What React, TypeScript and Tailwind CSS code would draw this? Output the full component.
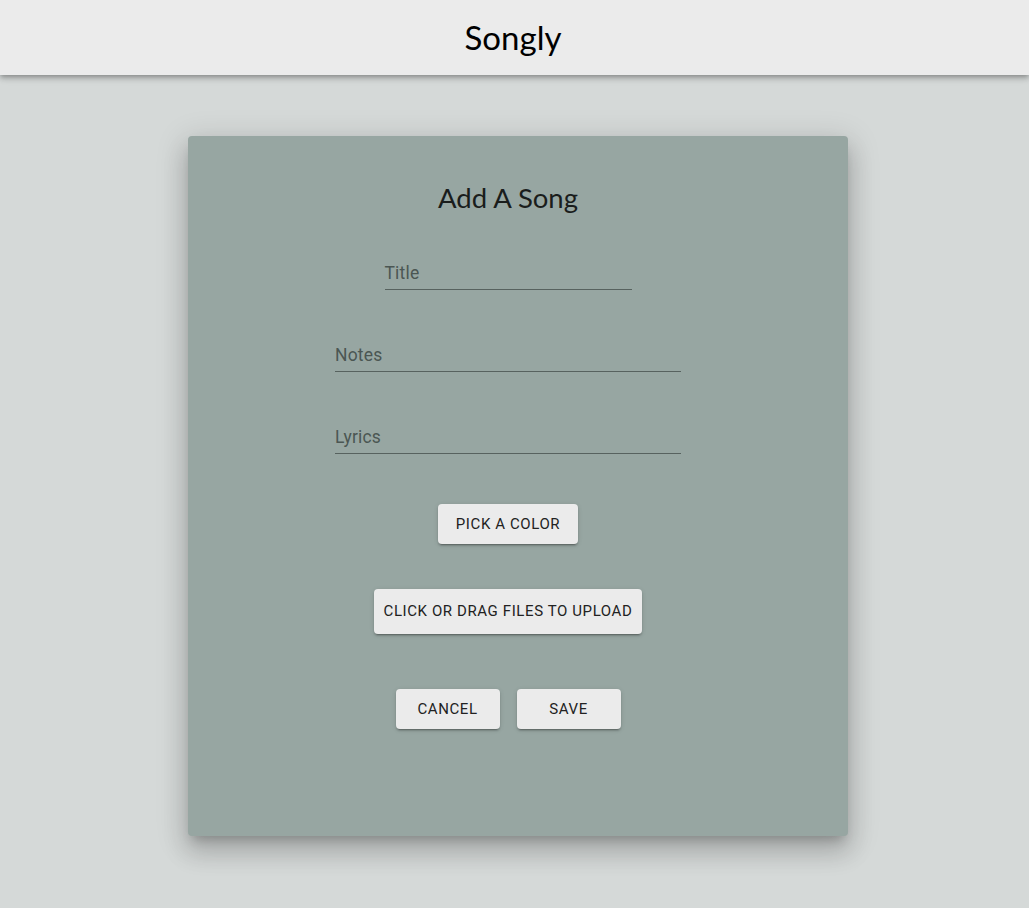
import React from "react";

const fields = [
  { label: "Title", width: "w-[247px]" },
  { label: "Notes", width: "w-[346px]" },
  { label: "Lyrics", width: "w-[346px]" },
];

function Field({ label, width }: { label: string; width: string }) {
  return (
    <div className={`${width} border-b border-[#57625f] pb-[6px] text-left`}>
      <div className="text-[17.5px] leading-[20px] text-[#4b5653] tracking-[0.01em]">{label}</div>
    </div>
  );
}

function Button({ children, className = "" }: { children: React.ReactNode; className?: string }) {
  return (
    <button
      className={`rounded-[4px] bg-[#ebebeb] text-[15px] font-normal uppercase tracking-[0.04em] text-[#222] shadow-[0_3px_1px_-2px_rgba(0,0,0,0.2),0_2px_2px_0_rgba(0,0,0,0.14),0_1px_5px_0_rgba(0,0,0,0.12)] ${className}`}
    >
      {children}
    </button>
  );
}

export default function App() {
  return (
    <div className="min-h-[908px] bg-[#d5d9d8] font-['Roboto',sans-serif]">
      {/* Header */}
      <header className="relative z-10 flex h-[75px] items-center justify-center bg-[#ebebeb] shadow-[0_2px_4px_-1px_rgba(0,0,0,0.2),0_4px_5px_0_rgba(0,0,0,0.14),0_1px_10px_0_rgba(0,0,0,0.12)]">
        <h1 className="pr-[3px] font-['Lato',sans-serif] text-[33px] leading-none text-black">Songly</h1>
      </header>

      <div className="flex justify-center pl-[7px] pt-[61px]">
        <div className="flex h-[700px] w-[660px] flex-col items-center rounded-[4px] bg-[#97a6a2] pr-[20px] pt-[45px] shadow-[0_8px_10px_-5px_rgba(0,0,0,0.2),0_16px_24px_2px_rgba(0,0,0,0.14),0_6px_30px_5px_rgba(0,0,0,0.12)]">
          <h2 className="font-['Lato',sans-serif] text-[27.5px] leading-[34px] text-[#1a1d1c]">Add A Song</h2>

          <div className="mt-[48px] flex flex-col items-center gap-[55px]">
            {fields.map((f) => (
              <Field key={f.label} label={f.label} width={f.width} />
            ))}
          </div>

          <Button className="mt-[50px] h-[40px] w-[140px]">Pick a color</Button>
          <Button className="mt-[45px] h-[45px] w-[268px]">Click or drag files to upload</Button>

          <div className="mt-[55px] flex gap-[17px]">
            <Button className="h-[40px] w-[104px]">Cancel</Button>
            <Button className="h-[40px] w-[104px]">Save</Button>
          </div>
        </div>
      </div>
    </div>
  );
}
